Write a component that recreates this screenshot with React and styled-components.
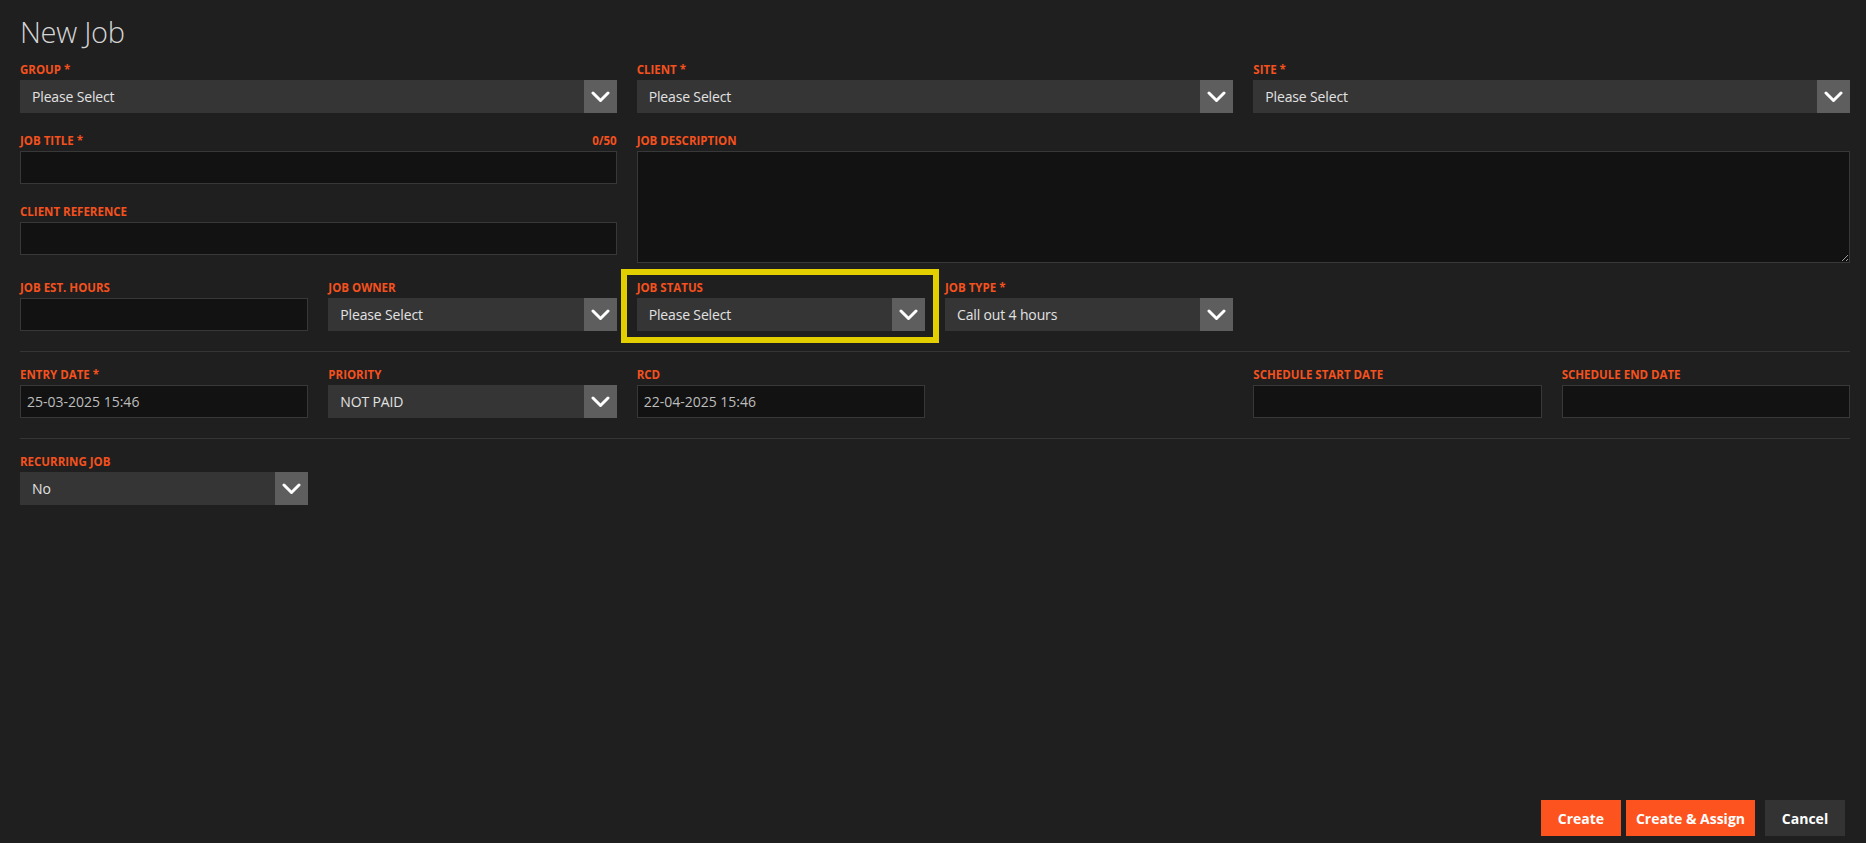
import React from "react";
import styled, { createGlobalStyle } from "styled-components";

const GlobalStyle = createGlobalStyle`
  html, body { margin: 0; padding: 0; background: #1f1f1f; }
  body { font-family: "Open Sans", "Liberation Sans", sans-serif; color: #ddd; }
  * { box-sizing: border-box; }
`;

const Page = styled.div`
  min-height: 100vh;
  display: flex;
  flex-direction: column;
  padding: 15px 16px 7px 20px;
`;

const Title = styled.h1`
  margin: 0;
  font-weight: 300;
  font-size: 29px;
  line-height: 34px;
  color: #d4d4d4;
  letter-spacing: -0.3px;
`;

const Grid = styled.div`
  display: grid;
  grid-template-columns: repeat(6, 1fr);
  column-gap: 20px;
  row-gap: 21px;
  grid-auto-rows: 50px;
  margin-top: ${(p) => p.$top || 0}px;
`;

const Field = styled.div`
  display: flex;
  flex-direction: column;
  min-width: 0;
  grid-column: ${(p) => p.$col || "auto"};
  grid-row: ${(p) => p.$row || "auto"};
  position: relative;
  ${(p) =>
    p.$highlight &&
    `
    &::after {
      content: "";
      position: absolute;
      top: -12px; bottom: -12px; left: -16px; right: -14px;
      border: 6px solid #e3cf00;
      pointer-events: none;
    }
  `}
`;

const LabelRow = styled.div`
  display: flex;
  justify-content: space-between;
  height: 14px;
  margin-bottom: 3px;
  flex: none;
`;

const Label = styled.label`
  font-size: 11.5px;
  line-height: 14px;
  font-weight: 700;
  color: #f4511e;
  text-transform: uppercase;
  white-space: nowrap;
`;

const SelectBox = styled.div`
  display: flex;
  flex: none;
  height: 33px;
  background: #353535;
  color: #e2e2e2;
  cursor: pointer;
`;

const SelectValue = styled.span`
  flex: 1;
  display: flex;
  align-items: center;
  padding-left: 12px;
  font-size: 14px;
  letter-spacing: -0.15px;
  white-space: nowrap;
  overflow: hidden;
`;

const ArrowBox = styled.span`
  width: 33px;
  flex: none;
  display: flex;
  align-items: center;
  justify-content: center;
  background: #5e5e5e;
`;

const TextInput = styled.input`
  flex: none;
  height: 33px;
  width: 100%;
  background: #121212;
  border: 1px solid #383838;
  color: #bdbdbd;
  font-family: inherit;
  font-size: 14px;
  padding: 0 6px;
  outline: none;
`;

const TextArea = styled.textarea`
  flex: none;
  height: 112px;
  width: 100%;
  background: #121212;
  border: 1px solid #383838;
  color: #bdbdbd;
  font-family: inherit;
  font-size: 14px;
  padding: 6px;
  outline: none;
  resize: both;
  color-scheme: dark;
  display: block;
`;

const Divider = styled.hr`
  border: none;
  border-top: 1px solid #353535;
  margin: ${(p) => p.$top || 20}px 0 16px;
  height: 0;
`;

const Footer = styled.div`
  margin-top: auto;
  display: flex;
  justify-content: flex-end;
  gap: 5px;
  padding-right: 5px;
`;

const Button = styled.button`
  height: 36px;
  min-width: 80px;
  padding: 0 10px;
  border: none;
  font-family: inherit;
  font-weight: 700;
  font-size: 14px;
  color: #fff;
  background: ${(p) => (p.$secondary ? "#333333" : "#fd531f")};
  margin-left: ${(p) => (p.$secondary ? "5px" : "0")};
  cursor: pointer;
`;

const Chevron = () => (
  <svg width="19" height="12" viewBox="0 0 19 12" fill="none">
    <polyline
      points="2,2 9.5,9.5 17,2"
      stroke="#fff"
      strokeWidth="3"
      strokeLinecap="round"
      strokeLinejoin="round"
    />
  </svg>
);

const Select = ({ value = "Please Select" }) => (
  <SelectBox>
    <SelectValue>{value}</SelectValue>
    <ArrowBox>
      <Chevron />
    </ArrowBox>
  </SelectBox>
);

const Head = ({ label, extra }) => (
  <LabelRow>
    <Label>{label}</Label>
    {extra && <Label>{extra}</Label>}
  </LabelRow>
);

export default function App() {
  return (
    <>
      <GlobalStyle />
      <Page>
        <Title>New Job</Title>

        <Grid $top={14}>
          <Field $col="1 / span 2">
            <Head label="Group *" />
            <Select />
          </Field>
          <Field $col="3 / span 2">
            <Head label="Client *" />
            <Select />
          </Field>
          <Field $col="5 / span 2">
            <Head label="Site *" />
            <Select />
          </Field>

          <Field $col="1 / span 2" $row="2">
            <Head label="Job Title *" extra="0/50" />
            <TextInput />
          </Field>
          <Field $col="3 / span 4" $row="2 / span 2">
            <Head label="Job Description" />
            <TextArea />
          </Field>
          <Field $col="1 / span 2" $row="3">
            <Head label="Client Reference" />
            <TextInput />
          </Field>
        </Grid>

        <Grid $top={26}>
          <Field>
            <Head label="Job Est. Hours" />
            <TextInput />
          </Field>
          <Field>
            <Head label="Job Owner" />
            <Select />
          </Field>
          <Field $highlight>
            <Head label="Job Status" />
            <Select />
          </Field>
          <Field>
            <Head label="Job Type *" />
            <Select value="Call out 4 hours" />
          </Field>
        </Grid>

        <Divider />

        <Grid>
          <Field $col="1">
            <Head label="Entry Date *" />
            <TextInput defaultValue="25-03-2025 15:46" />
          </Field>
          <Field $col="2">
            <Head label="Priority" />
            <Select value="NOT PAID" />
          </Field>
          <Field $col="3">
            <Head label="RCD" />
            <TextInput defaultValue="22-04-2025 15:46" />
          </Field>
          <Field $col="5">
            <Head label="Schedule Start Date" />
            <TextInput />
          </Field>
          <Field $col="6">
            <Head label="Schedule End Date" />
            <TextInput />
          </Field>
        </Grid>

        <Divider />

        <Grid>
          <Field $col="1">
            <Head label="Recurring Job" />
            <Select value="No" />
          </Field>
        </Grid>

        <Footer>
          <Button>Create</Button>
          <Button>Create &amp; Assign</Button>
          <Button $secondary>Cancel</Button>
        </Footer>
      </Page>
    </>
  );
}
